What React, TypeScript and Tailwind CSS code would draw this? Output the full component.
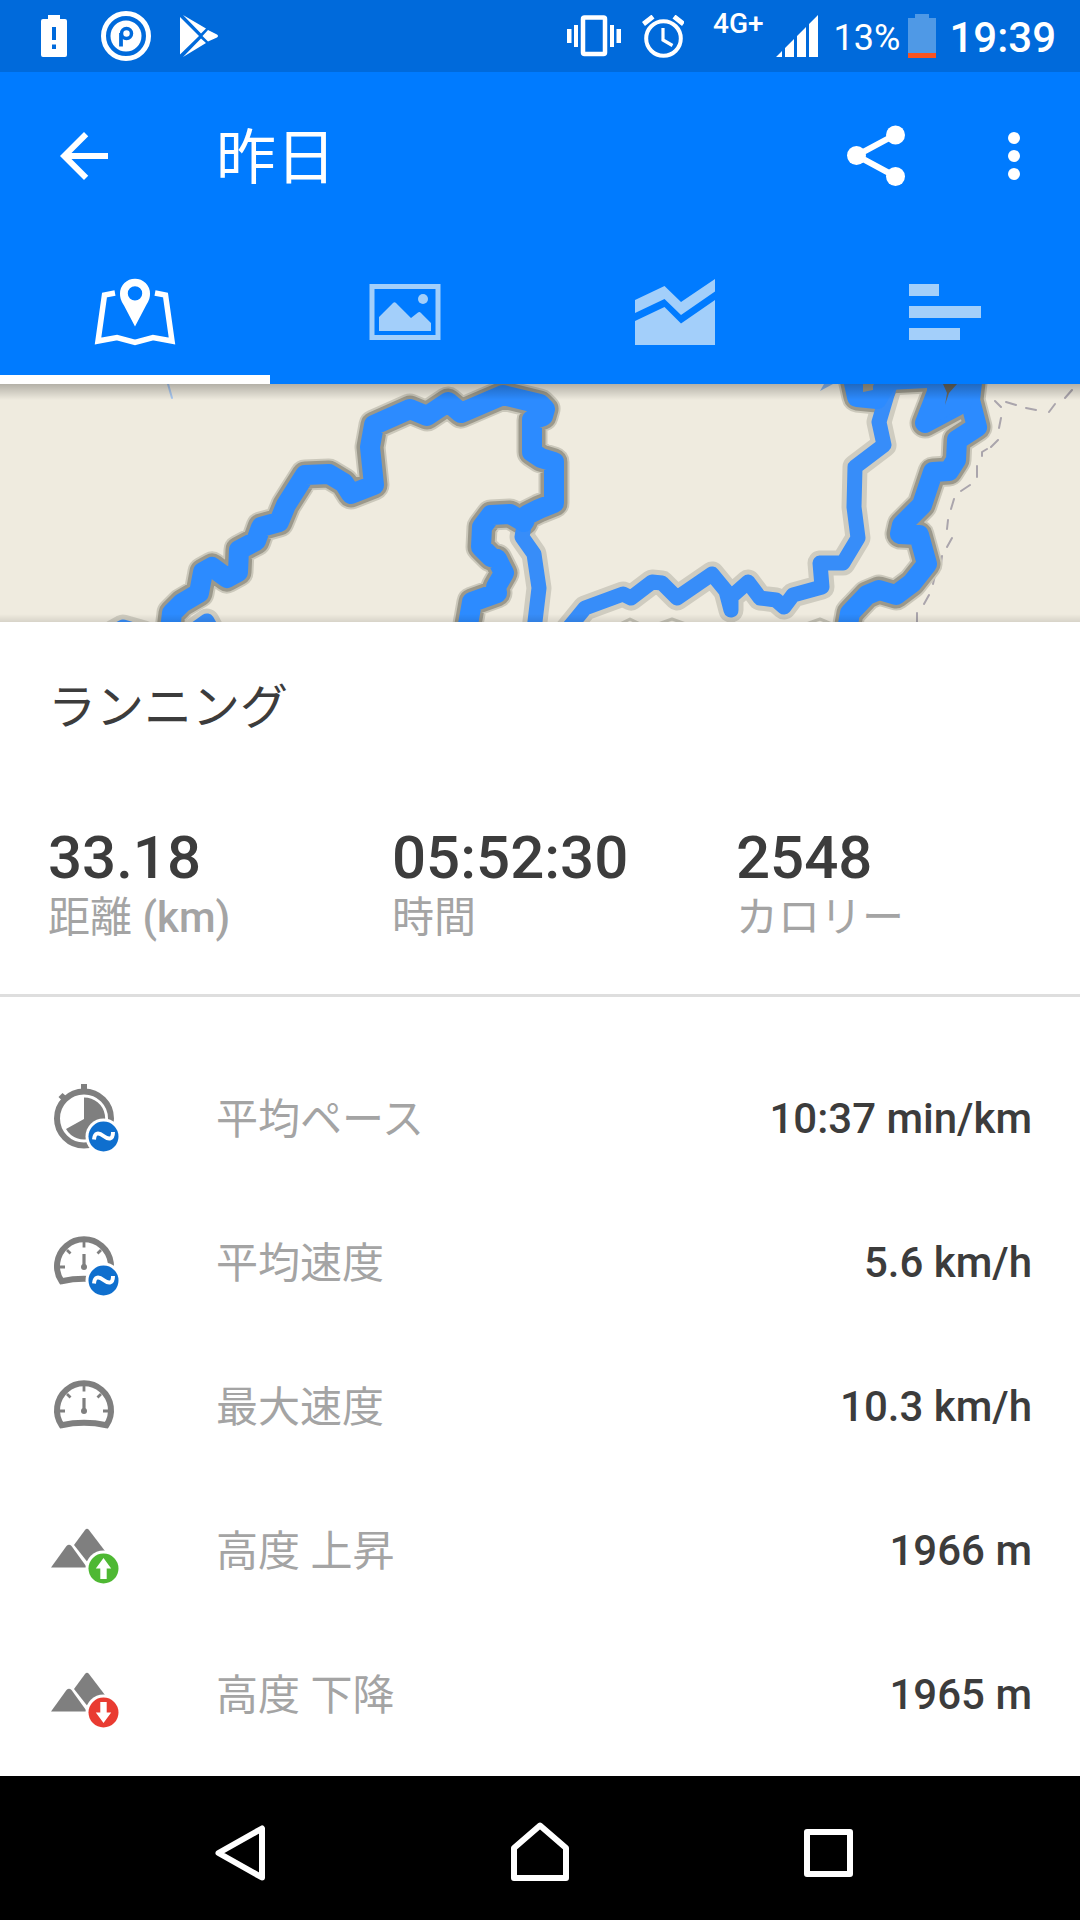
import type { ReactNode } from "react";

const ROUTE_MAIN =
  "M170 246L172 229L182 219L199 209L203 188L212 183L227 194L238 188L239 166L256 157L261 143L279 138L286 121L305 91L329 90L344 99L351 110L374 101L370 63L374 41L410 25L427 32L448 18L461 29L503 11L540 20L545 25L543 32L532 36L532 68L541 74L554 78L554 119L539 125L527 131L524 138L510 130L491 131L482 143L481 163L491 173L497 175L504 189L496 203L497 209L472 218L467 246";
const ROUTE_BRANCH = "M525 136L522 153L534 170L539 204L534 246";
const ROUTE_MIDDLE =
  "M567 246L585 224L623 210L631 214L652 198L662 199L677 214L712 190L726 207L731 226L731 213L748 198L760 214L776 216L784 223L793 211L822 203L820 179L843 179L858 154L854 123L855 83L884 61L879 38L889 4L890 -10";
const ROUTE_EAST =
  "M973 -10L970 16L977 43L957 56L956 76L949 87L933 88L922 121L902 141L900 150L919 151L927 180L912 199L896 211L879 206L867 211L850 229L847 246";
const ROUTE_LOOP = "M937 -10V8L925 39L957 22L959 -10";
const ROUTE_NORTH = "M852 -10L857 13L877 15L888 -4L926 -6";
const ROUTE_WEST = "M114 248L123 243L144 249M190 249L207 237L214 250";

function RouteMap() {
  const thick = [ROUTE_MAIN, ROUTE_EAST, ROUTE_LOOP, ROUTE_NORTH];
  const thin = [ROUTE_BRANCH, ROUTE_MIDDLE, ROUTE_WEST];
  return (
    <svg
      viewBox="0 0 1080 238"
      preserveAspectRatio="xMidYMid slice"
      className="block h-full w-full"
      fill="none"
      strokeLinejoin="round"
      strokeLinecap="round"
      role="img"
      aria-label="ルート"
    >
      <path d="M168 0L172 14" stroke="#a9c8f0" strokeWidth="2" />
      <path d="M820 7L824 0H833Z" fill="#86b4ee" />
      <path
        d="M1072 6L1065 14M1055 20L1049 28M1036 26L1026 24M1016 21L1006 18M995 17L1001 23M1001 34L999 44M998 56L991 63M987 65L982 68V72M977 82V93M970 101L961 107M954 115L951 125M948 136L947 145M952 154L947 163M942 172L941 180M935 191L933 200M929 211L924 220M917 229V240"
        stroke="#aaa5ac"
        strokeWidth="2"
      />
      <path d="M620 240L630 235L640 240M658 240L672 235L686 240M806 240L820 235L832 240" stroke="#c6c3b6" strokeWidth="3" />
      {thin.map((d) => (
        <path key={d} d={d} stroke="#cfccc0" strokeWidth="25" />
      ))}
      {thick.map((d) => (
        <path key={d} d={d} stroke="#cbc8bb" strokeWidth="31" />
      ))}
      {thick.map((d) => (
        <path key={d} d={d} stroke="#9b988b" strokeWidth="27" />
      ))}
      {thin.map((d) => (
        <path key={d} d={d} stroke="#378df9" strokeWidth="15" />
      ))}
      {thick.map((d) => (
        <path key={d} d={d} stroke="#2c8bff" strokeWidth="20" />
      ))}
      <path d="M930 0H976L970 26L957 27L930 42Z" fill="#2c8bff" />
      <path d="M863 0H873V6L863 8Z" fill="#9b988b" />
      <path d="M943 0H957L949 9L945 21L947 9Z" fill="#66665f" />
    </svg>
  );
}

function StatusBar() {
  return (
    <div className="flex h-[72px] items-center bg-[#006adb] pr-6 pl-[41px] text-white">
      <svg viewBox="41 15 26 42" className="h-[42px] w-[26px]" aria-hidden="true">
        <path
          fill="currentColor"
          fillRule="evenodd"
          d="M48 15H60V19H65a2 2 0 0 1 2 2V55a2 2 0 0 1-2 2H43a2 2 0 0 1-2-2V21a2 2 0 0 1 2-2H48ZM52 27V40H56V27ZM52 44.500V49H56V44.500Z"
        />
      </svg>
      <svg viewBox="101 11 50 50" className="ml-[34px] size-[50px]" aria-hidden="true">
        <circle cx="126" cy="36" r="22.500" fill="none" stroke="currentColor" strokeWidth="5" />
        <circle cx="126" cy="36" r="15.500" fill="currentColor" />
        <circle cx="126.500" cy="33.500" r="5" fill="none" stroke="#006adb" strokeWidth="3.500" />
        <path d="M121 33V46.500" stroke="#006adb" strokeWidth="3.800" />
      </svg>
      <svg viewBox="180 15 38 42" className="ml-[29px] h-[42px] w-[38px]" aria-hidden="true">
        <path
          fill="currentColor"
          d="M180 17L199 36L180 54.500ZM183 15L206 28.500L201 33.500ZM183 57L206 43L201 38.500ZM208 30L217 34.500Q219 36 217 37.500L208 41.500L202.500 36Z"
        />
      </svg>

      <div className="ml-auto flex h-full items-center">
        <svg viewBox="567 15 56 42" className="h-[42px] w-[56px]" aria-hidden="true">
          <rect x="584" y="17.500" width="22" height="36.500" rx="1.500" fill="none" stroke="currentColor" strokeWidth="4.500" />
          <path fill="currentColor" d="M575 25H579V47H575ZM568 29H572.500V43H568ZM611 25H615V47H611ZM617.500 29H622V43H617.500Z" />
        </svg>
        <svg
          viewBox="642 15 42 43"
          className="ml-5 h-[43px] w-[42px]"
          fill="none"
          stroke="currentColor"
          aria-hidden="true"
        >
          <circle cx="663.500" cy="38.500" r="17.300" strokeWidth="4" />
          <path d="M663 28V40L672.500 45.500" strokeWidth="3.200" />
          <path d="M643.500 24L653 16.500M683.500 24L674 16.500" strokeWidth="4.800" />
        </svg>
        <span className="ml-[29px] self-start pt-2 text-[28px] leading-8 font-medium">4G+</span>
        <svg viewBox="776 16 42 42" className="ml-3 h-[42px] w-[42px]" aria-hidden="true">
          <path fill="currentColor" d="M776 58L782 52V58ZM785 49L794 40V58H785ZM797 37L806 28V58H797ZM809 25L818 16V58H809Z" />
        </svg>
        <span className="ml-4 pt-1 text-[36px] leading-[42px]">13%</span>
        <svg viewBox="908 13 28 44" className="ml-2 h-[44px] w-[28px]" aria-hidden="true">
          <path fill="#4f99e6" d="M915 13H929V17H936V52H908V17H915Z" />
          <path fill="#f9531f" d="M908 52H936V57H908Z" />
        </svg>
        <span className="ml-[13px] pt-1 text-[42px] leading-[48px] font-medium">19:39</span>
      </div>
    </div>
  );
}

function AppBar() {
  return (
    <div className="flex h-[168px] items-center pr-[30px] pl-12">
      <button type="button" aria-label="戻る" className="size-[72px]">
        <svg viewBox="0 0 24 24" fill="currentColor">
          <path d="M20 11H7.830l5.590-5.590L12 4l-8 8 8 8 1.410-1.410L7.830 13H20v-2z" />
        </svg>
      </button>
      <h1 className="ml-24 flex-1 pt-1.5 text-[60px] leading-[72px]">昨日</h1>
      <button type="button" aria-label="共有" className="size-[72px]">
        <svg viewBox="840 120 72 72" fill="currentColor">
          <path d="M895.500 134.700L856.500 155.500L895.500 176.500" fill="none" stroke="currentColor" strokeWidth="6" />
          <circle cx="856.500" cy="155.500" r="9.500" />
          <circle cx="895.500" cy="135" r="9.500" />
          <circle cx="895.500" cy="176.500" r="9.500" />
        </svg>
      </button>
      <button type="button" aria-label="その他" className="ml-[66px] size-[72px]">
        <svg viewBox="0 0 72 72" fill="currentColor">
          <circle cx="36" cy="18" r="6" />
          <circle cx="36" cy="36" r="6" />
          <circle cx="36" cy="54" r="6" />
        </svg>
      </button>
    </div>
  );
}

const TABS: { label: string; icon: ReactNode }[] = [
  {
    label: "地図",
    icon: (
      <svg viewBox="90 267 90 90" className="size-[90px]" fill="none" aria-hidden="true">
        <path
          d="M115 293L104.500 295L98 341L117 337.500L135 342.500L153 337.500L172 341L165.500 295L155 293"
          stroke="currentColor"
          strokeWidth="5.500"
        />
        <path
          fill="currentColor"
          fillRule="evenodd"
          d="M135 278.700A15 15 0 0 1 150 293.700C150 299 148 302 146 305.500L135 326.500L124 305.500C122 302 120 299 120 293.700A15 15 0 0 1 135 278.700ZM135 286.200A7.200 7.200 0 1 0 135 300.600A7.200 7.200 0 1 0 135 286.200Z"
        />
      </svg>
    ),
  },
  {
    label: "写真",
    icon: (
      <svg viewBox="360 267 90 90" className="size-[90px]" fill="currentColor" aria-hidden="true">
        <rect x="372" y="286.500" width="66" height="51" fill="none" stroke="currentColor" strokeWidth="5" />
        <path d="M379 331V317L393 303Q394.500 301.500 396 303L411 318L418 312.500Q419.500 311.500 421 313L431 323V331Z" />
        <circle cx="423" cy="299" r="5" />
      </svg>
    ),
  },
  {
    label: "グラフ",
    icon: (
      <svg viewBox="630 267 90 90" className="size-[90px]" fill="currentColor" aria-hidden="true">
        <path d="M635 300L664.500 286L681 302L715 279V291.500L681 315L664.500 299L635 313ZM635 321L664.500 307L681 323.500L715 300V345H635Z" />
      </svg>
    ),
  },
  {
    label: "ラップ",
    icon: (
      <svg viewBox="900 267 90 90" className="size-[90px]" fill="currentColor" aria-hidden="true">
        <path d="M909 284H939V296H909ZM909 306H981V318H909ZM909 328H960V340H909Z" />
      </svg>
    ),
  },
];

function Tabs() {
  return (
    <div role="tablist" className="grid h-36 grid-cols-4">
      {TABS.map((tab, i) => (
        <button
          key={tab.label}
          type="button"
          role="tab"
          aria-selected={i === 0}
          aria-label={tab.label}
          className={
            i === 0
              ? "flex items-center justify-center border-y-[9px] border-t-transparent border-b-white text-white"
              : "flex items-center justify-center border-y-[9px] border-transparent text-[#a3cffa]"
          }
        >
          {tab.icon}
        </button>
      ))}
    </div>
  );
}

function AverageBadge() {
  return (
    <>
      <circle cx="55.500" cy="54.500" r="18" fill="#fff" />
      <circle cx="55.500" cy="54.500" r="15" fill="#0f6fce" />
      <path d="M46 57.500C46.500 50 51 50.500 55.500 54C60 57.500 65 58.500 65 50" fill="none" stroke="#fff" strokeWidth="4" />
    </>
  );
}

function PaceIcon() {
  return (
    <svg viewBox="0 0 72 72" className="size-[72px]" aria-hidden="true">
      <circle cx="36" cy="36.500" r="27" fill="none" stroke="#7f7f7f" strokeWidth="6" />
      <path d="M33 2H39V9H33ZM10.500 15L14.500 11L18 14L14 18.500Z" fill="#7f7f7f" />
      <path d="M36 37V15.500A21 21 0 1 1 18 47Z" fill="#7f7f7f" />
      <AverageBadge />
    </svg>
  );
}

function GaugeIcon({ average = false }: { average?: boolean }) {
  return (
    <svg viewBox="0 0 72 72" className="size-[72px]" fill="none" stroke="#7f7f7f" aria-hidden="true">
      <path d="M13.500 55.200A27 27 0 1 1 58.500 55.200Q36 50.500 13.500 55.200Z" strokeWidth="6" />
      <path d="M36 16V21.500M12 41H17M55 41H60M19 24L22.500 27.500M53 24L49.500 27.500" strokeWidth="2.800" />
      <path d="M36 28V41" strokeWidth="3.200" />
      <circle cx="36" cy="41" r="3" fill="#7f7f7f" stroke="none" />
      {average && (
        <g stroke="none">
          <AverageBadge />
        </g>
      )}
    </svg>
  );
}

function ElevationIcon({ down = false }: { down?: boolean }) {
  return (
    <svg viewBox="0 0 72 72" className="size-[72px]" aria-hidden="true">
      <path d="M3 53.500L18.500 32Q21 29.500 23.500 32L39 53.500Z" fill="#7f7f7f" />
      <path d="M26 31L37 16Q39 13.500 41 16L60 41L50 50L39 47.500Z" fill="#7f7f7f" />
      <circle cx="55.500" cy="54.500" r="18" fill="#fff" />
      <circle cx="55.500" cy="54.500" r="15" fill={down ? "#e93b31" : "#4eb833"} />
      <path
        d={
          down
            ? "M55.500 65L47.800 54.500H52.300V44H58.700V54.500H63.200Z"
            : "M55.500 44L47.800 54.500H52.300V65H58.700V54.500H63.200Z"
        }
        fill="#fff"
      />
    </svg>
  );
}

const STATS = [
  { value: "33.18", label: "距離", unit: " (km)" },
  { value: "05:52:30", label: "時間", unit: "" },
  { value: "2548", label: "カロリー", unit: "" },
];

const DETAILS: { label: string; value: string; icon: ReactNode }[] = [
  { label: "平均ペース", value: "10:37 min/km", icon: <PaceIcon /> },
  { label: "平均速度", value: "5.6 km/h", icon: <GaugeIcon average /> },
  { label: "最大速度", value: "10.3 km/h", icon: <GaugeIcon /> },
  { label: "高度 上昇", value: "1966 m", icon: <ElevationIcon /> },
  { label: "高度 下降", value: "1965 m", icon: <ElevationIcon down /> },
];

function NavigationBar() {
  return (
    <nav className="flex h-36 justify-center bg-black text-white">
      <button type="button" aria-label="戻る" className="flex w-[294px] items-center justify-center">
        <svg viewBox="210 1812 72 72" className="size-[72px]" fill="none" stroke="currentColor" strokeWidth="6" strokeLinejoin="round">
          <path d="M218.500 1853L262 1828.500V1877.500Z" />
        </svg>
      </button>
      <button type="button" aria-label="ホーム" className="flex w-[294px] items-center justify-center">
        <svg viewBox="504 1812 72 72" className="size-[72px]" fill="none" stroke="currentColor" strokeWidth="6" strokeLinejoin="round">
          <path d="M540 1825.500L566 1848V1878H514V1848Z" />
        </svg>
      </button>
      <button type="button" aria-label="履歴" className="flex w-[294px] items-center justify-center">
        <svg viewBox="798 1812 72 72" className="size-[72px]" fill="none" stroke="currentColor" strokeWidth="6" strokeLinejoin="round">
          <path d="M807 1832H850V1874H807Z" />
        </svg>
      </button>
    </nav>
  );
}

export default function App() {
  return (
    <div
      lang="ja"
      className="flex min-h-screen flex-col bg-white font-['Roboto','Noto_Sans_CJK_JP',sans-serif] text-[#3c3c3c]"
    >
      <header className="bg-[#007bff] text-white">
        <StatusBar />
        <AppBar />
        <Tabs />
      </header>

      <div className="relative h-[238px] overflow-hidden bg-[#efebdf]">
        <RouteMap />
        <div className="absolute inset-x-0 top-0 h-4 bg-linear-to-b from-black/25 to-transparent" />
        <div className="absolute inset-x-0 bottom-0 h-2 bg-linear-to-t from-black/10 to-transparent" />
      </div>

      <main className="flex-1">
        <section className="border-b-[3px] border-[#dedede] pt-[50px] pb-[46px] pl-12">
          <h2 className="text-[48px] leading-[72px]">ランニング</h2>
          <dl className="mt-[84px] grid grid-cols-3">
            {STATS.map((s) => (
              <div key={s.label} className="flex flex-col-reverse">
                <dt className="text-[42px] leading-[60px] text-[#a4a4a4]">
                  {s.label}
                  <span className="font-medium">{s.unit}</span>
                </dt>
                <dd className="text-[60px] leading-[60px] font-medium">{s.value}</dd>
              </div>
            ))}
          </dl>
        </section>

        <dl className="pt-[49px]">
          {DETAILS.map((d) => (
            <div key={d.label} className="flex h-36 items-center px-12">
              {d.icon}
              <dt className="ml-24 pt-1 text-[42px] leading-[60px] text-[#a4a4a4]">{d.label}</dt>
              <dd className="ml-auto pt-0.5 text-[42px] leading-[60px] font-medium">{d.value}</dd>
            </div>
          ))}
        </dl>
      </main>

      <NavigationBar />
    </div>
  );
}
